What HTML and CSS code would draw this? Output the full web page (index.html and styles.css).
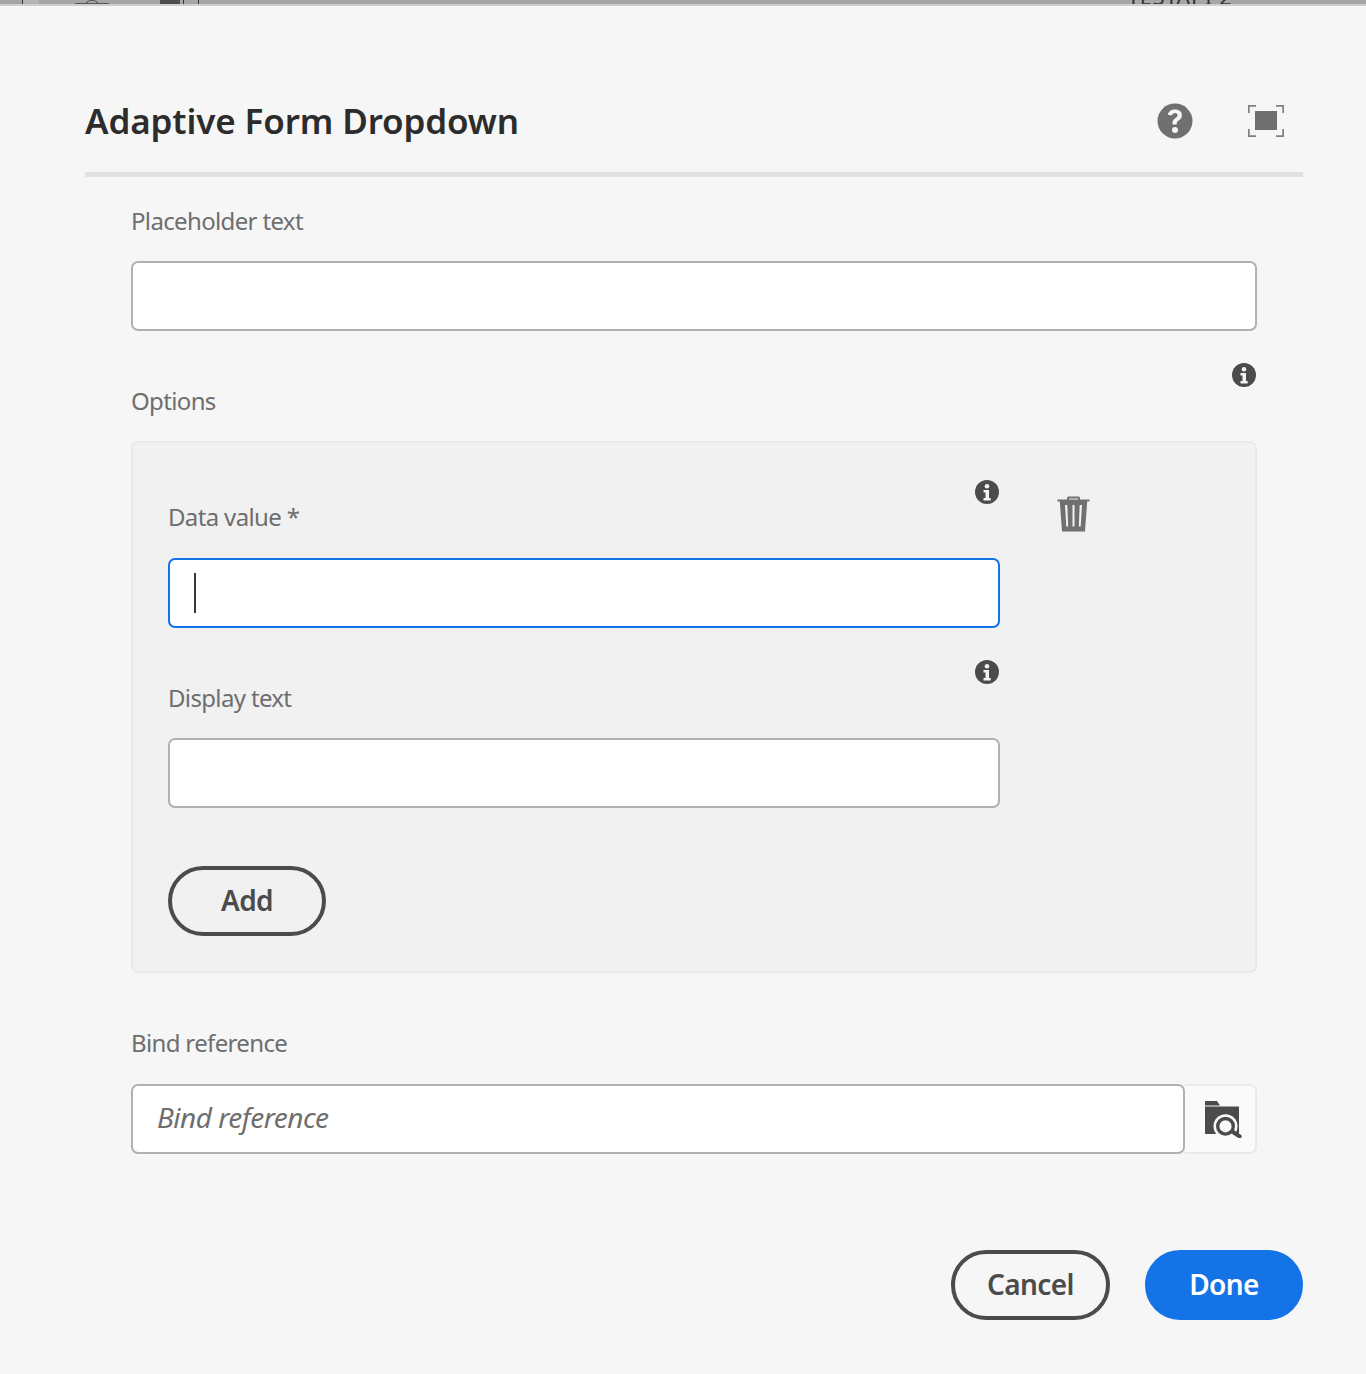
FILE: index.html
```html
<!DOCTYPE html>
<html lang="en">
<head>
<meta charset="utf-8">
<title>Adaptive Form Dropdown</title>
<link rel="stylesheet" href="styles.css">
</head>
<body>
<div class="backdrop">
  <div class="backdrop-icons">
    <span class="tick tick-a"></span>
    <span class="tick tick-b"></span>
    <span class="bump"></span>
    <span class="block"></span>
    <span class="tick tick-c"></span>
    <span class="tick tick-d"></span>
  </div>
  <span class="backdrop-title">TESTAPI 2</span>
</div>
<main class="dialog">
  <header class="dialog-header">
    <h1 class="dialog-title">Adaptive Form Dropdown</h1>
    <div class="header-actions">
      <svg class="icon-help" viewBox="0 0 36 36" aria-label="Help"><circle cx="18" cy="18" r="17.5" fill="#707070"/><path d="M18.200 6.500c-4 0-6.800 1.900-7.400 5.300l4.100.8c.3-1.800 1.500-2.700 3.100-2.700 1.600 0 2.600.9 2.600 2.200 0 1.200-.6 1.900-2.100 3-2.100 1.500-3 2.900-3 5v1.400h4.200v-1c0-1.200.5-1.900 2-3 2.100-1.500 3.200-3 3.200-5.300 0-3.500-2.700-5.700-6.700-5.700z" fill="#f6f6f6"/><circle cx="18" cy="27" r="3" fill="#f6f6f6"/></svg>
      <svg class="icon-full" viewBox="0 0 36 32" aria-label="Fullscreen"><path d="M.8 8V.8H8M28 .8h7.200V8M35.200 24v7.200H28M8 31.200H.8V24" fill="none" stroke="#808080" stroke-width="1.800"/><rect x="7" y="6" width="22" height="19" fill="#707070"/></svg>
    </div>
  </header>
  <div class="form">
    <section class="field field-placeholder">
      <label class="label">Placeholder text</label>
      <div class="input"></div>
    </section>
    <section class="options">
      <div class="label-row options-label">
        <span class="label">Options</span>
        <svg class="icon-info" viewBox="0 0 24 24"><use href="#info"/></svg>
      </div>
      <div class="panel">
        <div class="panel-fields">
          <div class="label-row">
            <span class="label">Data value *</span>
            <svg class="icon-info" viewBox="0 0 24 24"><use href="#info"/></svg>
          </div>
          <div class="input input-focus"><span class="caret"></span></div>
          <div class="label-row label-row-display">
            <span class="label">Display text</span>
            <svg class="icon-info" viewBox="0 0 24 24"><use href="#info"/></svg>
          </div>
          <div class="input"></div>
          <button class="btn btn-add">Add</button>
        </div>
        <svg class="icon-trash" viewBox="0 0 33 36" aria-label="Delete"><path d="M10 4V2.200C10 1.200 10.800.5 11.600.5h9.800c.8 0 1.600.7 1.600 1.700V4h-2V2.500h-9V4z" fill="#707070"/><path d="M.5 3.500h32V5.500h-2.300l-2.200 30H5l-2.200-30H.5z" fill="#707070"/><path d="M8 9l1.300 21.500h1.900L10.300 9zM15.500 9v21.500h2V9zM22.700 9l-.9 21.500h1.900L25 9z" fill="#f1f1f1"/></svg>
      </div>
    </section>
    <section class="field field-bind">
      <label class="label">Bind reference</label>
      <div class="bind-row">
        <div class="input input-bind"><span class="hint">Bind reference</span></div>
        <button class="browse" aria-label="Browse">
          <svg class="icon-browse" viewBox="0 0 38 37"><path d="M1 0h12l3 4.500H1z" fill="#4b4b4b"/><path d="M1 5.500h34V33H1z" fill="#4b4b4b"/><circle cx="21.500" cy="25.300" r="12" fill="#fafafa"/><circle cx="21.500" cy="25.300" r="7.800" fill="#fafafa" stroke="#4b4b4b" stroke-width="3.400"/><path d="M29 31l6.700 4.500" fill="none" stroke="#4b4b4b" stroke-width="4" stroke-linecap="round"/></svg>
        </button>
      </div>
    </section>
  </div>
  <footer class="dialog-footer">
    <button class="btn btn-cancel">Cancel</button>
    <button class="btn btn-done">Done</button>
  </footer>
</main>
<svg class="defs" width="0" height="0" aria-hidden="true"><symbol id="info" viewBox="0 0 24 24"><circle cx="12" cy="12" r="12" fill="#4b4b4b"/><circle cx="12" cy="6.200" r="2.300" fill="#f3f3f3"/><path d="M8.500 10h5.500v8h1.700v2.500H8.500V18h2v-5.500h-2z" fill="#f3f3f3"/></symbol></svg>
</body>
</html>
```
FILE: styles.css
```css
* { box-sizing: border-box; }
html, body { margin: 0; padding: 0; }
body {
  background: #f6f6f6;
  font-family: "Noto Sans", "Open Sans", sans-serif;
  color: #4b4b4b;
  height: 1374px;
  overflow: hidden;
}
.backdrop {
  height: 6px;
  background: #a6a6a6;
  border-bottom: 2px solid #cfcfcf;
  display: flex;
  justify-content: space-between;
  overflow: hidden;
  padding-right: 134px;
}
.backdrop-icons { display: flex; align-items: flex-start; height: 4px; padding-left: 22px; }
.tick { width: 1px; height: 4px; background: #333; }
.tick-b { background: #b4b4b4; width: 16px; }
.bump { width: 34px; height: 1px; margin: 3px 0 0 36px; background: #555; display: flex; justify-content: center; }
.bump::after { content: ""; width: 12px; height: 4px; margin-top: -3px; border: 1px solid #555; border-radius: 6px 6px 0 0; }
.block { width: 20px; height: 4px; margin-left: 51px; background: #4d4d4d; }
.tick-c { margin-left: 3px; }
.tick-d { margin-left: 14px; }
.backdrop-title {
  font-size: 22px;
  line-height: 22px;
  color: #333;
  margin-top: -15px;
  letter-spacing: 0.5px;
}
.dialog { padding: 0 63px 0 85px; }
.dialog-header {
  padding-top: 90px;
  border-bottom: 5px solid #e1e1e1;
  box-sizing: content-box;
  height: 76px;
  display: flex;
  justify-content: space-between;
  align-items: flex-start;
}
.dialog-title {
  margin: 0;
  font-size: 35px;
  line-height: 50px;
  font-weight: 600;
  color: #2c2c2c;
  letter-spacing: -0.13px;
}
.header-actions { display: flex; align-items: center; gap: 55px; padding: 7px 19px 0 0; }
.icon-help { width: 36px; height: 36px; }
.icon-full { width: 36px; height: 32px; }
.form { padding: 0 46px; }
.label { font-size: 24px; line-height: 34px; color: #6e6e6e; letter-spacing: -0.65px; display: block; }
.field-placeholder { padding-top: 27px; }
.field-placeholder .label { margin-bottom: 23px; }
.input {
  height: 70px;
  background: #fff;
  border: 2px solid #b1b1b1;
  border-radius: 7px;
  display: flex;
  align-items: center;
}
.options { padding-top: 32px; }
.label-row { display: flex; justify-content: space-between; align-items: flex-start; }
.options-label { height: 78px; }
.options-label .label { margin-top: 21px; }
.panel {
  height: 532px;
  background: #f1f1f1;
  border: 2px solid #e9e9e9;
  border-radius: 7px;
  padding: 37px 0 0 35px;
  display: flex;
  gap: 57px;
}
.panel-fields { width: 832px; }
.panel-fields .label-row { height: 78px; }
.panel-fields .label-row .label { margin-top: 20px; }
.panel-fields .label-row-display { margin-top: 32px; }
.panel-fields .label-row-display .label { margin-top: 21px; }
.input-focus { border-color: #1473e6; padding-left: 24px; }
.caret { width: 2px; height: 40px; background: #3a3a3a; }
.icon-info { width: 24px; height: 24px; flex: none; margin-right: 1px; }
.icon-trash { width: 33px; height: 36px; margin-top: 16px; }
.defs { position: absolute; }
.btn {
  font-family: inherit;
  font-size: 28px;
  font-weight: 600;
  height: 70px;
  border-radius: 35px;
  background: transparent;
  border: 4px solid #4b4b4b;
  color: #4b4b4b;
  padding: 0 0 2px;
  letter-spacing: -0.6px;
}
.btn-add { width: 158px; margin-top: 58px; display: block; }
.field-bind { padding-top: 53px; }
.field-bind .label { margin-bottom: 24px; }
.bind-row { display: flex; }
.input-bind { flex: 1; padding: 0 0 4px 24px; }
.hint { font-size: 28px; font-style: italic; color: #6e6e6e; letter-spacing: -0.5px; }
.browse {
  width: 72px;
  height: 70px;
  background: #fafafa;
  border: 2px solid #e9e9e9;
  border-left: 0;
  border-radius: 0 7px 7px 0;
  padding: 0 0 0 19px;
  display: flex;
  align-items: center;
}
.icon-browse { width: 38px; height: 37px; }
.dialog-footer { display: flex; justify-content: flex-end; gap: 35px; padding-top: 96px; }
.btn-cancel { width: 159px; }
.btn-done { width: 158px; background: #1473e6; border-color: #1473e6; color: #fff; }
```
